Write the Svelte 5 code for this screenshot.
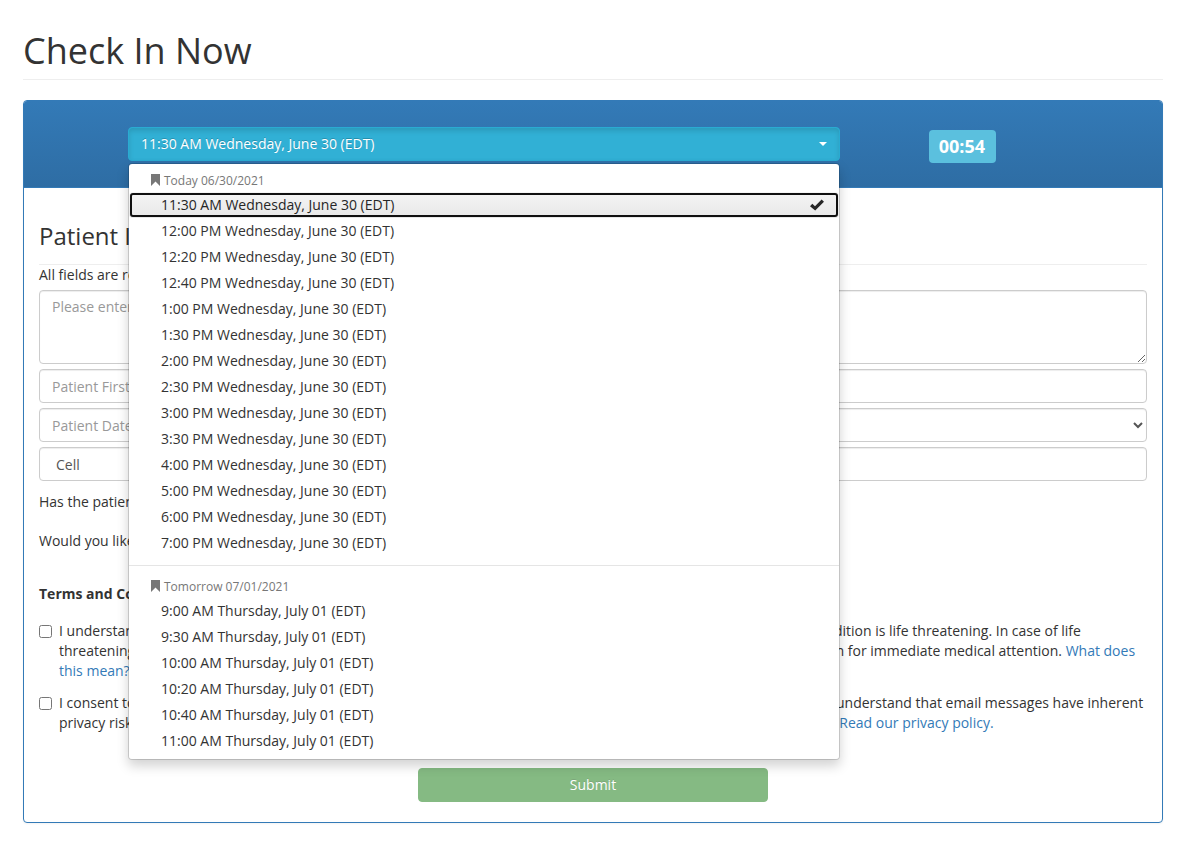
<script>
    const groups = [
        {
            label: 'Today 06/30/2021',
            day: 'Wednesday, June 30 (EDT)',
            times: [
                '11:30 AM', '12:00 PM', '12:20 PM', '12:40 PM', '1:00 PM', '1:30 PM', '2:00 PM',
                '2:30 PM', '3:00 PM', '3:30 PM', '4:00 PM', '5:00 PM', '6:00 PM', '7:00 PM'
            ]
        },
        {
            label: 'Tomorrow 07/01/2021',
            day: 'Thursday, July 01 (EDT)',
            times: ['9:00 AM', '9:30 AM', '10:00 AM', '10:20 AM', '10:40 AM', '11:00 AM']
        }
    ];

    let open = $state(true);
    let selected = $state('11:30 AM Wednesday, June 30 (EDT)');
    let understood = $state(false);
    let consented = $state(false);

    function pick(slot) {
        selected = slot;
        open = false;
    }
</script>

<main class="container">
    <h1>Check In Now</h1>

    <section class="panel">
        <header class="panel-heading">
            <div class="picker">
                <button type="button" class="toggle" aria-haspopup="listbox" aria-expanded={open} onclick={() => (open = !open)}>
                    <span>{selected}</span>
                    <span class="caret"></span>
                </button>

                {#if open}
                    <div class="menu" role="listbox" aria-label="Check in time">
                        {#each groups as group}
                            <div class="group" role="group" aria-label={group.label}>
                                <div class="group-label">
                                    <svg width="10" height="13" viewBox="0 0 10 13" aria-hidden="true">
                                        <path d="M1 0h9v12L5.5 7.6 1 12z" fill="currentColor" />
                                    </svg>
                                    <span>{group.label}</span>
                                </div>
                                {#each group.times as time}
                                    {@const slot = `${time} ${group.day}`}
                                    <button
                                        type="button"
                                        role="option"
                                        class="option"
                                        class:selected={slot === selected}
                                        aria-selected={slot === selected}
                                        onclick={() => pick(slot)}
                                    >
                                        <span>{slot}</span>
                                        {#if slot === selected}
                                            <svg width="14" height="12" viewBox="0 0 14 12" aria-hidden="true">
                                                <path d="M0 7.2 2.3 4.8 5 7.2 11.6 0.5 14 2.8 5.2 11.6z" fill="currentColor" />
                                            </svg>
                                        {/if}
                                    </button>
                                {/each}
                            </div>
                        {/each}
                    </div>
                {/if}
            </div>
            <span class="timer">00:54</span>
        </header>

        <form class="panel-body" onsubmit={(e) => e.preventDefault()}>
            <h3>Patient Information</h3>
            <p class="hint">All fields are required.</p>

            <div class="fields">
                <textarea class="control wide" rows="3" aria-label="Reason for visit" placeholder="Please enter the reason for your visit"></textarea>
                <input class="control" type="text" aria-label="Patient First Name" placeholder="Patient First Name" />
                <input class="control" type="text" aria-label="Patient Last Name" placeholder="Patient Last Name" />
                <input class="control" type="text" aria-label="Patient Date of Birth" placeholder="Patient Date of Birth" />
                <select class="control" aria-label="Gender">
                    <option>Gender</option>
                    <option>Female</option>
                    <option>Male</option>
                </select>
                <div class="phone">
                    <select class="control" aria-label="Phone type">
                        <option>Cell</option>
                        <option>Home</option>
                    </select>
                    <input class="control" type="tel" aria-label="Phone" placeholder="Phone" />
                </div>
                <input class="control" type="email" aria-label="Email" placeholder="Email" />
            </div>

            <p class="question">Has the patient been here before?</p>
            <p class="question">Would you like to receive reminders?</p>

            <h4>Terms and Conditions</h4>
            <div class="check">
                <input type="checkbox" id="understood" bind:checked={understood} />
                <label for="understood">
                    I understand that I should not use this electronic service to check in for a medical emergency, or if I believe that my condition is life threatening. In case of life
                    threatening conditions, I understand that I must call 911 now or proceed directly to the closest hospital emergency room for immediate medical attention.
                    <a href="#emergency">What does this mean?</a>
                </label>
            </div>
            <div class="check">
                <input type="checkbox" id="consented" bind:checked={consented} />
                <label for="consented">
                    I consent to receiving email and text messages about this patient visit at the contact details that I have entered above. I understand that email messages have inherent
                    privacy risks, and that all of the information in these messages may be read by others if my device or account is shared.
                    <a href="#privacy">Read our privacy policy.</a>
                </label>
            </div>

            <button type="submit" class="submit" disabled={!understood || !consented}>Submit</button>
        </form>
    </section>
</main>

<style>
    :global(body) {
        margin: 0;
        background: #fff;
    }

    .container {
        box-sizing: border-box;
        max-width: 1186px;
        margin: 0 auto;
        padding: 30px 23px;
        color: #333;
        font: 14px/20px "Open Sans", sans-serif;
    }

    .container * { box-sizing: border-box; }

    button, input, select, textarea { font: inherit; }

    h1 {
        margin: 0 0 20px;
        padding-bottom: 7px;
        border-bottom: 1px solid #eee;
        font-size: 36px;
        font-weight: 400;
        line-height: 42px;
    }

    .panel {
        border: 1px solid #337ab7;
        border-radius: 4px;
        box-shadow: 0 1px 2px rgba(0, 0, 0, 0.05);
    }

    .panel-heading {
        display: flex;
        align-items: flex-start;
        gap: 89px;
        padding: 26px 166px 24px 104px;
        border-bottom: 1px solid #337ab7;
        border-radius: 3px 3px 0 0;
        background: linear-gradient(#337ab7, #2e6da4);
    }

    .picker {
        position: relative;
        flex: 1;
    }

    .toggle {
        display: flex;
        align-items: center;
        justify-content: space-between;
        width: 100%;
        height: 34px;
        padding: 0 12px;
        border: 1px solid #2aabd2;
        border-radius: 4px;
        background: #31b0d5;
        box-shadow: inset 0 3px 5px rgba(0, 0, 0, 0.125);
        color: #fff;
        text-shadow: 0 -1px 0 rgba(0, 0, 0, 0.2);
        cursor: pointer;
    }

    .caret {
        border-top: 4px solid;
        border-right: 4px solid transparent;
        border-left: 4px solid transparent;
    }

    .menu {
        position: absolute;
        z-index: 10;
        top: 100%;
        left: 0;
        width: 100%;
        margin-top: 2px;
        padding: 5px 0;
        border: 1px solid rgba(0, 0, 0, 0.15);
        border-radius: 4px;
        background: #fff;
        background-clip: padding-box;
        box-shadow: 0 6px 12px rgba(0, 0, 0, 0.175);
    }

    .group + .group {
        margin-top: 9px;
        padding-top: 9px;
        border-top: 1px solid #e5e5e5;
    }

    .group-label {
        display: flex;
        align-items: center;
        gap: 4px;
        padding: 3px 21px;
        color: #777;
        font-size: 12px;
        line-height: 17px;
    }

    .option {
        display: flex;
        align-items: center;
        justify-content: space-between;
        width: 100%;
        padding: 3px 15px 3px 32px;
        border: 0;
        background: none;
        color: #333;
        text-align: left;
        cursor: pointer;
    }

    .option:hover { background: #f5f5f5; }

    .option.selected {
        border-radius: 4px;
        outline: 2px solid #101010;
        outline-offset: -3px;
        background: linear-gradient(#f5f5f5, #e8e8e8);
        color: #262626;
    }

    .timer {
        margin-top: 3px;
        padding: 6px 11px 7px 10px;
        border-radius: 4px;
        background: #5bc0de;
        color: #fff;
        font-size: 18px;
        font-weight: 700;
    }

    .panel-body { padding: 15px 15px 20px; }

    h3 {
        margin: 19px 0 0;
        padding-bottom: 15px;
        border-bottom: 1px solid #eee;
        font-size: 24px;
        font-weight: 400;
        line-height: 27px;
    }

    .hint { margin: 0 0 5px; }

    .fields {
        display: grid;
        grid-template-columns: 1fr 1fr;
        gap: 5px;
        margin-bottom: 11px;
    }

    .wide { grid-column: 1 / -1; }

    .control {
        width: 100%;
        height: 34px;
        padding: 6px 12px;
        border: 1px solid #ccc;
        border-radius: 4px;
        background-color: #fff;
        box-shadow: inset 0 1px 1px rgba(0, 0, 0, 0.075);
        color: #555;
    }

    textarea.control {
        display: block;
        height: auto;
    }

    .control::placeholder { color: #999; }

    .phone {
        display: grid;
        grid-template-columns: 1fr 2fr;
        gap: 5px;
    }

    .question { margin: 0 0 19px; }

    h4 {
        margin: 33px 0 17px;
        font-size: 14px;
        line-height: 20px;
    }

    .check {
        display: flex;
        align-items: flex-start;
        gap: 7px;
        margin-bottom: 12px;
    }

    .check input {
        flex: none;
        width: 13px;
        height: 13px;
        margin: 4px 0 0;
    }

    a {
        color: #337ab7;
        text-decoration: none;
    }

    a:hover { text-decoration: underline; }

    .submit {
        display: block;
        width: 350px;
        max-width: 100%;
        height: 34px;
        margin: 35px auto 0;
        border: 1px solid #449641;
        border-radius: 4px;
        background: #449641;
        color: #fff;
        text-shadow: 0 -1px 0 rgba(0, 0, 0, 0.2);
        cursor: pointer;
    }

    .submit:disabled {
        opacity: 0.65;
        cursor: not-allowed;
    }
</style>
